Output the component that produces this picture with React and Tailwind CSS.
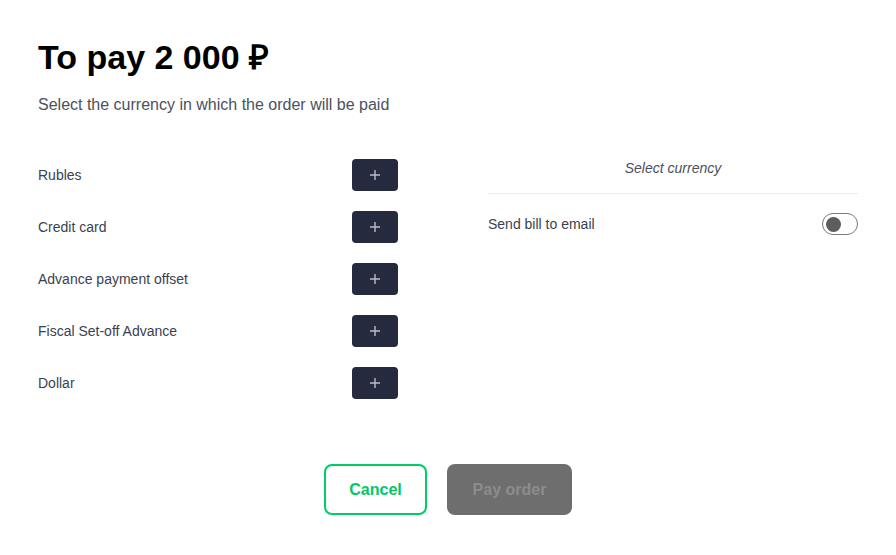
import React from "react";

const methods = [
  "Rubles",
  "Credit card",
  "Advance payment offset",
  "Fiscal Set-off Advance",
  "Dollar",
];

export default function App() {
  let [sendBill, setSendBill] = React.useState(false);

  return (
    <div
      className="w-[896px] h-[555px] bg-white px-[38px] pt-[37px] text-[#3c4150]"
      style={{ fontFamily: '"Liberation Sans", Arial, sans-serif' }}
    >
      <h1 className="text-[34px] leading-[40px] font-bold text-black">
        To pay 2 000 ₽
      </h1>
      <p className="mt-[17px] text-[16px] leading-[22px] text-[#4c5160]">
        Select the currency in which the order will be paid
      </p>

      <div className="mt-[43px] flex gap-[90px]">
        {/* payment methods */}
        <div className="w-[360px] flex flex-col gap-[20px]">
          {methods.map((m) => (
            <div key={m} className="flex items-center justify-between h-[32px]">
              <span className="text-[14px]">{m}</span>
              <button
                type="button"
                className="w-[46px] h-[32px] rounded-[4px] bg-[#262a3e] flex items-center justify-center"
              >
                <svg width="12" height="12" viewBox="0 0 12 12">
                  <path d="M6 1v10M1 6h10" stroke="#b9bcc6" strokeWidth="1.4" />
                </svg>
              </button>
            </div>
          ))}
        </div>

        {/* summary */}
        <div className="flex-1">
          <div className="h-[35px] border-b border-[#ececec] flex items-start justify-center">
            <span className="italic text-[14px] leading-[18px] text-[#4c5160]">
              Select currency
            </span>
          </div>
          <div className="mt-[19px] flex items-center justify-between">
            <span className="text-[14px]">Send bill to email</span>
            <button
              type="button"
              onClick={() => setSendBill(!sendBill)}
              className="w-[36px] h-[22px] rounded-full border border-[#7b7b7b] flex items-center px-[3px]"
            >
              <span className="w-[15px] h-[15px] rounded-full bg-[#5d5d5d]" />
            </button>
          </div>
        </div>
      </div>

      <div className="mt-[65px] flex justify-center gap-[20px]">
        <button
          type="button"
          className="w-[103px] h-[51px] rounded-[8px] border-2 border-[#00cc6a] text-[#00c768] text-[16px] font-bold"
        >
          Cancel
        </button>
        <button
          type="button"
          className="w-[125px] h-[51px] rounded-[8px] bg-[#6e6e6e] text-[#8c8c8c] text-[16px] font-bold"
        >
          Pay order
        </button>
      </div>
    </div>
  );
}
